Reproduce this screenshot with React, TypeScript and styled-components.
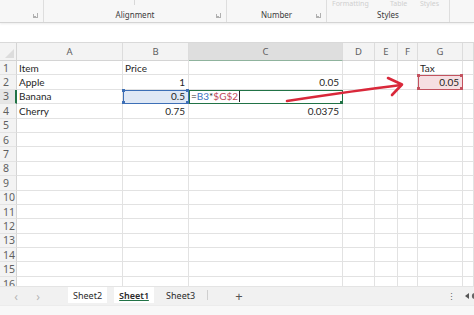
import React from 'react';
import styled, { createGlobalStyle, css } from 'styled-components';

const GlobalStyle = createGlobalStyle`
  html, body {
    margin: 0;
    padding: 0;
    background: #ffffff;
  }
  body {
    font-family: Lato, 'Noto Sans', sans-serif;
  }
`;

type Align = 'left' | 'right';
type Mark = 'none' | 'blue' | 'green' | 'red';

interface CellData {
  text?: React.ReactNode;
  align?: Align;
  mark?: Mark;
}

const COLUMNS = ['A', 'B', 'C', 'D', 'E', 'F', 'G', ''];
const COL_WIDTHS = '17px 106px 66px 154px 32px 23px 20px 45px 1fr';
const ROW_COUNT = 16;

const Formula = () => (
  <>
    =<RefBlue>B3</RefBlue>*<RefRed>$G$2</RefRed>
    <Caret />
  </>
);

const SHEET: Record<number, Record<string, CellData>> = {
  1: { A: { text: 'Item' }, B: { text: 'Price' }, G: { text: 'Tax' } },
  2: {
    A: { text: 'Apple' },
    B: { text: '1', align: 'right' },
    C: { text: '0.05', align: 'right' },
    G: { text: '0.05', align: 'right', mark: 'red' },
  },
  3: {
    A: { text: 'Banana' },
    B: { text: '0.5', align: 'right', mark: 'blue' },
    C: { text: <Formula />, mark: 'green' },
  },
  4: {
    A: { text: 'Cherry' },
    B: { text: '0.75', align: 'right' },
    C: { text: '0.0375', align: 'right' },
  },
};

const App = () => {
  return (
    <>
      <GlobalStyle />
      <Screen>
        <Ribbon>
          <FadedRow>
            <FadedLabel style={{ left: 332 }}>Formatting</FadedLabel>
            <FadedLabel style={{ left: 390 }}>Table</FadedLabel>
            <FadedLabel style={{ left: 420 }}>Styles</FadedLabel>
          </FadedRow>
          <Group $width={44}>
            <Launcher />
          </Group>
          <Group $width={183}>
            <GroupLabel>Alignment</GroupLabel>
            <TopTick />
            <Launcher />
          </Group>
          <Group $width={100}>
            <GroupLabel>Number</GroupLabel>
            <Launcher />
          </Group>
          <Group $width={123}>
            <GroupLabel>Styles</GroupLabel>
          </Group>
          <Group $width={24} $last />
        </Ribbon>
        <FormulaArea />
        <Grid>
          <Corner>
            <CornerTriangle />
          </Corner>
          {COLUMNS.map((c, i) => (
            <ColHeader key={i} $active={c === 'C'}>
              {c}
            </ColHeader>
          ))}
          {Array.from({ length: ROW_COUNT }, (_, i) => i + 1).map((r) => (
            <React.Fragment key={r}>
              <RowHeader $active={r === 3}>{r}</RowHeader>
              {COLUMNS.map((c, ci) => {
                const cell = SHEET[r]?.[c];
                const mark = cell?.mark ?? 'none';
                return (
                  <Cell key={ci} $align={cell?.align ?? 'left'} $mark={mark}>
                    <CellText>{cell?.text}</CellText>
                    {mark === 'blue' || mark === 'red' ? (
                      <>
                        <Handle $mark={mark} $pos="tl" />
                        <Handle $mark={mark} $pos="tr" />
                        <Handle $mark={mark} $pos="bl" />
                        <Handle $mark={mark} $pos="br" />
                      </>
                    ) : null}
                    {mark === 'green' ? <Handle $mark={mark} $pos="br" /> : null}
                  </Cell>
                );
              })}
            </React.Fragment>
          ))}
        </Grid>
        <TabBar>
          <NavArrow>‹</NavArrow>
          <NavArrow>›</NavArrow>
          <Tabs>
            <Tab $variant="card">Sheet2</Tab>
            <Tab $variant="active">Sheet1</Tab>
            <Tab $variant="plain">Sheet3</Tab>
            <TabDivider />
            <AddTab>+</AddTab>
          </Tabs>
          <TabBarEnd>
            <Dots>⋮</Dots>
            <ScrollNub>
              <svg width="14" height="8" viewBox="0 0 14 8">
                <path d="M5 1 L1 4 L5 7 Z" fill="#555" />
                <circle cx="11" cy="4" r="3.2" fill="#666" />
              </svg>
            </ScrollNub>
          </TabBarEnd>
        </TabBar>
        <StatusStrip />
        <ArrowLayer width="474" height="315" viewBox="0 0 474 315">
          <path
            d="M287 101 C 320 96, 360 90, 401 85"
            stroke="#d9283a"
            strokeWidth="2.6"
            fill="none"
            strokeLinecap="round"
          />
          <path
            d="M388 78 L402 84.5 L392 95"
            stroke="#d9283a"
            strokeWidth="2.6"
            fill="none"
            strokeLinecap="round"
            strokeLinejoin="round"
          />
        </ArrowLayer>
      </Screen>
    </>
  );
};

export default App;

const Screen = styled.div`
  position: relative;
  width: 474px;
  height: 315px;
  overflow: hidden;
  display: flex;
  flex-direction: column;
  background: #ffffff;
`;

const Ribbon = styled.div`
  position: relative;
  display: flex;
  height: 22px;
  flex-shrink: 0;
  background: #f7f7f7;
  border-bottom: 1px solid #d4d4d4;
  box-shadow: 0 1px 2px rgba(0, 0, 0, 0.08);
`;

const FadedRow = styled.div`
  position: absolute;
  inset: 0;
  pointer-events: none;
`;

const FadedLabel = styled.span`
  position: absolute;
  top: 0;
  font-family: 'Noto Sans', sans-serif;
  font-size: 7px;
  line-height: 8px;
  color: #cfcfcf;
`;

const Group = styled.div<{ $width: number; $last?: boolean }>`
  position: relative;
  width: ${(p) => p.$width}px;
  flex-shrink: 0;
  border-right: ${(p) => (p.$last ? 'none' : '1px solid #dedede')};
  box-sizing: border-box;
  display: flex;
  align-items: flex-end;
  justify-content: center;
  padding-bottom: 2px;
`;

const GroupLabel = styled.span`
  font-family: 'Noto Sans', sans-serif;
  font-size: 8px;
  line-height: 10px;
  color: #3b3b3b;
`;

const Launcher = styled.span`
  position: absolute;
  right: 5px;
  bottom: 4px;
  width: 4px;
  height: 4px;
  border-left: 1px solid #b0b0b0;
  border-bottom: 1px solid #b0b0b0;
  transform: scaleX(-1);
  &::after {
    content: '';
    position: absolute;
    left: 1px;
    top: 1px;
    width: 2px;
    height: 2px;
    border-right: 1px solid #b0b0b0;
    border-bottom: 1px solid #b0b0b0;
  }
`;

const TopTick = styled.span`
  position: absolute;
  left: 90px;
  top: 0;
  width: 1px;
  height: 5px;
  background: #d8d8d8;
`;

const FormulaArea = styled.div`
  height: 19px;
  flex-shrink: 0;
  background: #ffffff;
  border-bottom: 1px solid #d9d9d9;
`;

const Grid = styled.div`
  flex: 1;
  min-height: 0;
  overflow: hidden;
  display: grid;
  grid-template-columns: ${COL_WIDTHS};
  grid-template-rows: 18px repeat(${ROW_COUNT}, 14.4px);
  align-content: start;
  font-family: Lato, 'Noto Sans', sans-serif;
`;

const headerBase = css`
  box-sizing: border-box;
  display: flex;
  align-items: center;
  font-family: 'Noto Sans', sans-serif;
  font-size: 9.5px;
  color: #5f5f5f;
  background: #f3f3f3;
`;

const Corner = styled.div`
  ${headerBase};
  position: relative;
  border-right: 1px solid #d4d4d4;
  border-bottom: 1px solid #d4d4d4;
`;

const CornerTriangle = styled.span`
  position: absolute;
  right: 2px;
  bottom: 2px;
  width: 0;
  height: 0;
  border-left: 9px solid transparent;
  border-bottom: 9px solid #dcdcdc;
`;

const ColHeader = styled.div<{ $active: boolean }>`
  ${headerBase};
  justify-content: center;
  border-right: 1px solid #dcdcdc;
  border-bottom: 1px solid ${(p) => (p.$active ? '#8fb39d' : '#d4d4d4')};
  background: ${(p) => (p.$active ? '#dedede' : '#f3f3f3')};
`;

const RowHeader = styled.div<{ $active: boolean }>`
  ${headerBase};
  font-size: 10.5px;
  padding-left: 3px;
  border-bottom: 1px solid #e3e3e3;
  border-right: ${(p) => (p.$active ? '2px solid #217346' : '1px solid #d4d4d4')};
  background: ${(p) => (p.$active ? '#e6e6e6' : '#f3f3f3')};
`;

const markStyles: Record<Mark, ReturnType<typeof css> | string> = {
  none: '',
  blue: css`
    background: #dfe8f5;
    outline: 1.5px solid #3d6fb6;
    outline-offset: -1px;
    z-index: 2;
  `,
  green: css`
    background: #ffffff;
    outline: 1.5px solid #217346;
    outline-offset: -1px;
    z-index: 2;
  `,
  red: css`
    background: #f6dfe2;
    outline: 1.5px solid #c3525f;
    outline-offset: -1px;
    z-index: 2;
  `,
};

const Cell = styled.div<{ $align: Align; $mark: Mark }>`
  position: relative;
  box-sizing: border-box;
  display: flex;
  align-items: center;
  justify-content: ${(p) => (p.$align === 'right' ? 'flex-end' : 'flex-start')};
  padding: 0 3px 0 2px;
  border-right: 1px solid #e2e2e2;
  border-bottom: 1px solid #e2e2e2;
  font-size: 10px;
  color: #1f1f1f;
  white-space: nowrap;
  ${(p) => markStyles[p.$mark]};
`;

const CellText = styled.span`
  display: inline-flex;
  align-items: center;
  line-height: 12px;
`;

const handleColor: Record<Mark, string> = {
  none: 'transparent',
  blue: '#3d6fb6',
  green: '#217346',
  red: '#c3525f',
};

const Handle = styled.span<{ $mark: Mark; $pos: 'tl' | 'tr' | 'bl' | 'br' }>`
  position: absolute;
  width: 3px;
  height: 3px;
  background: ${(p) => handleColor[p.$mark]};
  ${(p) => (p.$pos[0] === 't' ? 'top: -1px;' : 'bottom: -1px;')}
  ${(p) => (p.$pos[1] === 'l' ? 'left: -1px;' : 'right: -1px;')}
`;

const RefBlue = styled.span`
  color: #3a72c2;
`;

const RefRed = styled.span`
  color: #c2485a;
`;

const Caret = styled.span`
  display: inline-block;
  width: 1px;
  height: 11px;
  margin-left: 1px;
  background: #222;
`;

const TabBar = styled.div`
  height: 18px;
  flex-shrink: 0;
  display: flex;
  align-items: stretch;
  background: #f1f1f1;
  border-top: 1px solid #e4e4e4;
  font-family: 'Noto Sans', sans-serif;
`;

const NavArrow = styled.span`
  width: 20px;
  display: flex;
  align-items: center;
  justify-content: center;
  margin-left: 2px;
  font-size: 12px;
  color: #b5b5b5;
  &:first-child {
    margin-left: 6px;
  }
`;

const Tabs = styled.div`
  display: flex;
  align-items: stretch;
  margin-left: 20px;
  gap: 7px;
`;

const Tab = styled.span<{ $variant: 'card' | 'active' | 'plain' }>`
  position: relative;
  display: flex;
  align-items: center;
  padding: 0 5px;
  margin-bottom: 2px;
  font-size: 9px;
  color: #2b2b2b;
  background: ${(p) => (p.$variant === 'plain' ? 'transparent' : '#ffffff')};
  font-weight: ${(p) => (p.$variant === 'active' ? 600 : 400)};
  ${(p) =>
    p.$variant === 'active' &&
    css`
      &::after {
        content: '';
        position: absolute;
        left: 5px;
        right: 5px;
        bottom: 2px;
        height: 1.5px;
        background: #217346;
        border-radius: 1px;
      }
    `}
`;

const TabDivider = styled.span`
  width: 1px;
  margin: 3px 0 5px;
  background: #cfcfcf;
`;

const AddTab = styled.span`
  display: flex;
  align-items: center;
  margin-left: 20px;
  font-size: 13px;
  color: #555;
`;

const TabBarEnd = styled.div`
  margin-left: auto;
  display: flex;
  align-items: center;
  gap: 8px;
`;

const Dots = styled.span`
  font-size: 9px;
  color: #666;
`;

const ScrollNub = styled.span`
  display: flex;
  align-items: center;
  margin-right: -4px;
`;

const StatusStrip = styled.div`
  height: 10px;
  flex-shrink: 0;
  box-sizing: border-box;
  background: #f8f8f8;
  border-top: 1px solid #ececec;
`;

const ArrowLayer = styled.svg`
  position: absolute;
  left: 0;
  top: 0;
  pointer-events: none;
  z-index: 5;
`;
